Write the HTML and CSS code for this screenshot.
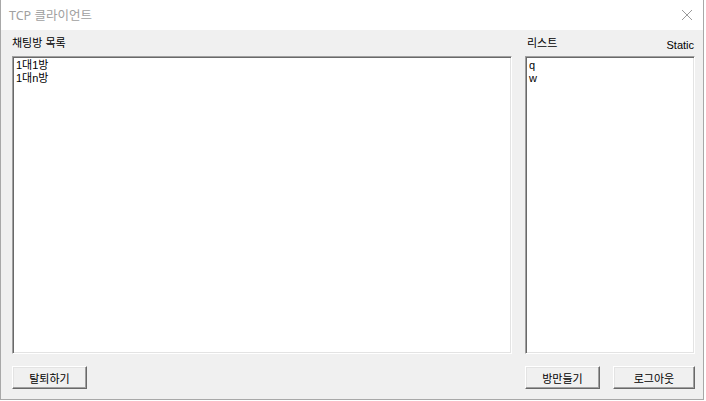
FILE: index.html
```html
<!DOCTYPE html>
<html lang="ko">
<head>
    <meta charset="UTF-8">
    <title>TCP 클라이언트</title>
    <link rel="stylesheet" href="styles.css">
</head>
<body>
    <div class="window">
        <div class="titlebar">
            <span class="title">TCP 클라이언트</span>
            <svg class="close" width="12" height="12" viewBox="0 0 12 12">
                <path d="M1 1 L11 11 M11 1 L1 11" stroke="#9a9a9a" stroke-width="1" fill="none"/>
            </svg>
        </div>

        <div class="dialog">
            <div class="label-row">채팅방 목록</div>
            <div class="label-row split">
                <span>리스트</span>
                <span class="static">Static</span>
            </div>

            <div class="listbox">
                <div class="item">1대1방</div>
                <div class="item">1대n방</div>
            </div>
            <div class="listbox">
                <div class="item">q</div>
                <div class="item">w</div>
            </div>

            <div class="button-row">
                <button class="btn">탈퇴하기</button>
            </div>
            <div class="button-row right">
                <button class="btn">방만들기</button>
                <button class="btn wide">로그아웃</button>
            </div>
        </div>
    </div>
</body>
</html>
```

FILE: styles.css
```css
body {
    margin: 0;
    background: #ffffff;
    font-family: 'Liberation Sans', 'Noto Sans CJK KR', sans-serif;
    font-size: 11px;
    color: #000;
}
.window {
    width: 702px;
    height: 399px;
    border: 1px solid #a8a8a8;
    border-top: none;
    background: #f0f0f0;
    display: flex;
    flex-direction: column;
}
.titlebar {
    height: 31px;
    background: #ffffff;
    display: flex;
    align-items: center;
    justify-content: space-between;
    padding: 0 9px 0 8px;
}
.title {
    font-family: 'Noto Sans', 'Noto Sans CJK KR', sans-serif;
    font-size: 12.5px;
    color: #a0a0a0;
    margin-top: -1px;
}
.close {
    margin-right: 1px;
    margin-top: -1px;
}
.dialog {
    display: grid;
    grid-template-columns: 500px 170px;
    grid-template-rows: 26px 298px 45px;
    column-gap: 13px;
    padding: 0 8px 0 11px;
}
.label-row {
    padding-top: 6px;
    line-height: 14px;
}
.split {
    display: flex;
    justify-content: space-between;
    padding-left: 2px;
    padding-right: 1px;
}
.static {
    margin-top: 2px;
}
.listbox {
    background: #ffffff;
    border: 1px solid;
    border-color: #a0a0a0 #ffffff #ffffff #a0a0a0;
    box-shadow: inset 1px 1px 0 #696969, inset -1px -1px 0 #e3e3e3;
    padding: 2px 3px;
    line-height: 13px;
}
.button-row {
    display: flex;
    align-items: flex-start;
    padding-top: 12px;
    gap: 13px;
}
.btn {
    width: 75px;
    height: 23px;
    padding: 0;
    background: #f0f0f0;
    border: 1px solid;
    border-color: #ffffff #696969 #696969 #ffffff;
    box-shadow: inset -1px -1px 0 #a0a0a0, inset 1px 1px 0 #e3e3e3;
    font-family: 'Liberation Sans', 'Noto Sans CJK KR', sans-serif;
    font-size: 11px;
    color: #000;
}
.btn.wide {
    width: 82px;
}
```
